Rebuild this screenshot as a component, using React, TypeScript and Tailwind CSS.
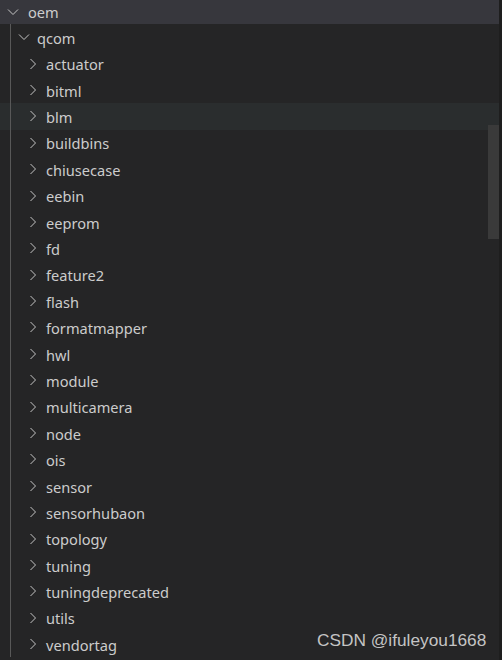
import React from "react";

const items = [
  "actuator","bitml","blm","buildbins","chiusecase","eebin","eeprom","fd","feature2","flash","formatmapper","hwl","module","multicamera","node","ois","sensor","sensorhubaon","topology","tuning","tuningdeprecated","utils","vendortag",
];

function ChevronRight() {
  return (
    <svg width="10" height="12" viewBox="0 0 10 12" className="shrink-0">
      <path d="M2.5 1 L7.5 6 L2.5 11" fill="none" stroke="#c5c5c5" strokeWidth="1" />
    </svg>
  );
}
function ChevronDown() {
  return (
    <svg width="12" height="10" viewBox="0 0 12 10" className="shrink-0">
      <path d="M1 2.5 L6 7.5 L11 2.5" fill="none" stroke="#c5c5c5" strokeWidth="1" />
    </svg>
  );
}

export default function App() {
  return (
    <div
      className="relative w-[502px] h-[660px] overflow-hidden bg-[#252526] text-[#cccccc] text-[14.6px]"
      style={{ fontFamily: '"Noto Sans", "Open Sans", sans-serif' }}
    >
      <div className="flex flex-col w-[499px]">
        <div className="h-[24px] bg-[#37373d] flex items-center pl-[7px] gap-[9px]">
          <ChevronDown />
          <span className="leading-none relative top-[0px]">oem</span>
        </div>
        <div className="relative flex flex-col">
          <div className="absolute left-[10px] top-0 bottom-0 w-px bg-[#585858]" />
          <div className="h-[26.4px] flex items-center pl-[18px] gap-[7px]">
            <ChevronDown />
            <span className="leading-none relative top-[1px]">qcom</span>
          </div>
          {items.map((it) => (
            <div
              key={it}
              className={
                "h-[26.4px] flex items-center pl-[28px] gap-[8px] " +
                (it === "blm" ? "bg-[#2a2d2e]" : "")
              }
            >
              <ChevronRight />
              <span className="leading-none relative top-[1px]">{it}</span>
            </div>
          ))}
        </div>
      </div>
      <div className="absolute right-0 top-0 bottom-0 w-[3px] bg-[#1e1e1e]" />
      <div className="absolute left-[488px] top-[125px] w-[11px] h-[114px] bg-[#3a3a3a]" />
      <div
        className="absolute left-[317px] top-[628px] text-[17.3px] text-[#c4c4c4]"
        style={{ fontFamily: '"Liberation Sans", Arial, sans-serif' }}
      >
        CSDN @ifuleyou1668
      </div>
    </div>
  );
}
